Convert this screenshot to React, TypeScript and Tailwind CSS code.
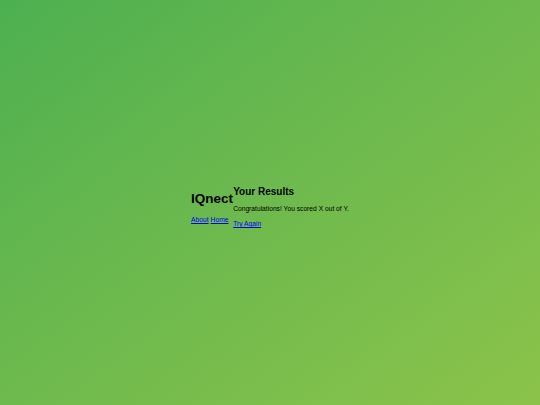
export default function App() {
  return (
    <div className="w-full h-[405px] flex items-center justify-center bg-gradient-to-br from-[#4cb050] to-[#8bc34a]" style={{ fontFamily: '"Liberation Sans", Arial, sans-serif' }}>
      <div className="flex items-start mt-[10px]">
        <div className="flex flex-col mt-[5px]">
          <h1 className="text-[13.5px] font-bold leading-none text-black m-0 mb-[11px]">IQnect</h1>
          <nav className="flex gap-[2px] text-[6.7px] leading-none">
            <a href="#" className="text-[#0000ee] underline">About</a>
            <a href="#" className="text-[#0000ee] underline">Home</a>
          </nav>
        </div>
        <div className="flex flex-col">
          <h2 className="text-[10px] font-bold leading-none text-black mb-[9px]">Your Results</h2>
          <p className="text-[6.7px] leading-none text-black mb-[8px]">Congratulations! You scored X out of Y.</p>
          <a href="#" className="text-[6.7px] leading-none text-[#0000ee] underline">Try Again</a>
        </div>
      </div>
    </div>
  );
}
